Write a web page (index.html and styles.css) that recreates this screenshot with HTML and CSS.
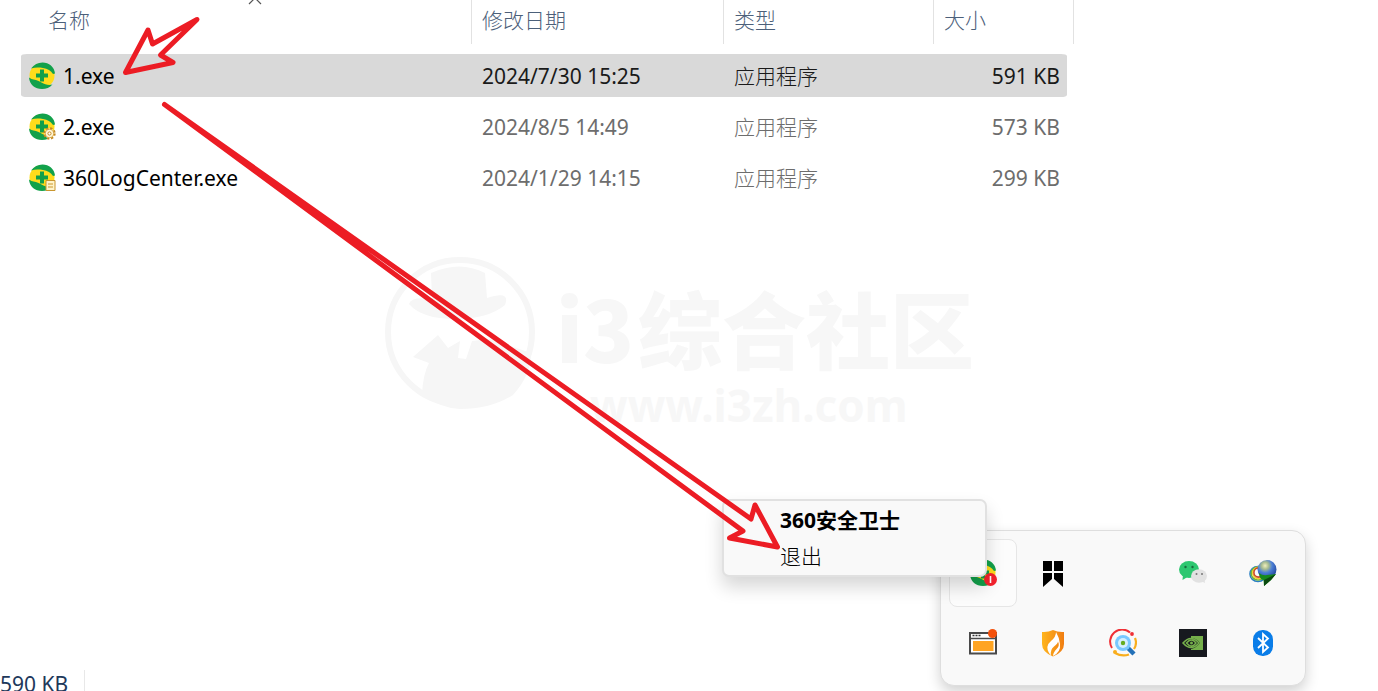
FILE: index.html
```html
<!DOCTYPE html>
<html lang="zh-CN">
<head>
<meta charset="utf-8">
<title>360</title>
<link rel="stylesheet" href="styles.css">
</head>
<body>
<svg class="defs" width="0" height="0" aria-hidden="true">
  <defs>
    <symbol id="shield" viewBox="0 0 28 28">
      <circle cx="14" cy="13.500" r="12.500" fill="#ffdc1c"/>
      <path d="M3 6.500C6 2.500 10 .5 14.500 .5 21 .5 26.500 5 27 11.500l-2 .5C23 8.500 19.500 6.500 15 6 10.500 5.300 7 5.300 3 6.500z" fill="#12a14b"/>
      <path d="M1 15.500C1.500 22.500 7 27 14 27c4 0 8-1.500 10.500-4.500-4 1-7.500 0-11-2C9.500 18 6 17.500 3.500 17z" fill="#12a14b"/>
      <path d="M12 7.500h4v4h4v4h-4v4h-4v-4H8v-4h4z" fill="#129f4a"/>
    </symbol>
  </defs>
</svg>
<main class="explorer">
  <table class="files">
    <colgroup><col class="c-name"><col class="c-date"><col class="c-type"><col class="c-size"><col class="c-end"></colgroup>
    <thead>
      <tr>
        <th scope="col"><button class="head head-name" type="button">名称</button>
          <svg class="sort" viewBox="0 0 14 6" aria-hidden="true"><path d="M1 4l6-6 6 6" fill="none" stroke="#555" stroke-width="1.200"/></svg></th>
        <th scope="col"><button class="head" type="button">修改日期</button></th>
        <th scope="col"><button class="head" type="button">类型</button></th>
        <th scope="col" colspan="2"><button class="head" type="button">大小</button></th>
      </tr>
    </thead>
    <tbody>
      <tr class="selected">
        <td><div class="file"><svg class="ico"><use href="#shield"/></svg>1.exe</div></td>
        <td>2024/7/30 15:25</td><td class="cjk">应用程序</td><td class="size">591 KB</td>
      </tr>
      <tr>
        <td><div class="file"><svg class="ico" viewBox="0 0 28 28"><use href="#shield"/><circle cx="21.500" cy="20.500" r="5" fill="#fff6d8" stroke="#c58a22" stroke-width="2.400" stroke-dasharray="2.200 1.727"/><circle cx="21.500" cy="20.500" r="4.200" fill="#fff6d8" stroke="#d9a848"/><circle cx="21.500" cy="20.500" r="1.600" fill="#fff" stroke="#c58a22"/></svg>2.exe</div></td>
        <td>2024/8/5 14:49</td><td class="cjk">应用程序</td><td class="size">573 KB</td>
      </tr>
      <tr>
        <td><div class="file"><svg class="ico" viewBox="0 0 28 28"><use href="#shield"/><path d="M18 16.500h9v10h-9z" fill="#fff3c8" stroke="#c9962f"/><path d="M20 20h5M20 23h5" stroke="#c9962f"/></svg>360LogCenter.exe</div></td>
        <td>2024/1/29 14:15</td><td class="cjk">应用程序</td><td class="size">299 KB</td>
      </tr>
    </tbody>
  </table>
  <footer class="status"><span>590 KB</span></footer>
</main>

<svg class="watermark" viewBox="0 0 600 200" role="img" aria-label="i3综合社区 www.i3zh.com">
  <circle cx="76" cy="82" r="72" fill="none" stroke="#f6f6f6" stroke-width="6"/>
  <path d="M47 23q29-13 54 0l2 25q24-8 18 7-17 14-50 14-33 0-46-15 2-8 23-5z" fill="#f6f6f6"/>
  <path d="M29 107l25-22 10 13 12-7-2 17 8 1 6-18 18-2 41 14q0 22-18 42-22 14-53 14-20-1-38-15 1-20 7-31z" fill="#f6f6f6"/>
  <text class="wm-title" x="172" y="113">i3</text>
  <text class="wm-title" x="254" y="113">综合社区</text>
  <text class="wm-url" x="206" y="172">www.i3zh.com</text>
</svg>

<section class="tray" aria-label="tray">
  <button class="cell active" type="button" aria-label="360">
    <svg viewBox="0 0 28 28"><use href="#shield"/><circle cx="21.500" cy="20.500" r="6.500" fill="#f5222d"/><path d="M21.500 17v7" stroke="#fff" stroke-width="1.600"/></svg>
  </button>
  <button class="cell" type="button" aria-label="bookmark">
    <svg viewBox="0 0 28 28"><path d="M4 2h9v10H4zM15 2h9v10h-9zM4 14h9v6l-9 8zM15 14h9v14l-9-8z" fill="#000"/></svg>
  </button>
  <span></span>
  <button class="cell" type="button" aria-label="WeChat">
    <svg viewBox="0 0 28 28"><ellipse cx="10" cy="10.500" rx="10" ry="8.500" fill="#2dc770"/><path d="M4 15l-.5 6 5-3z" fill="#2dc770"/><circle cx="6.500" cy="8" r="1.200" fill="#176b3c"/><circle cx="13.500" cy="8" r="1.200" fill="#176b3c"/><ellipse cx="20" cy="17" rx="8" ry="6.800" fill="#e2e2e2"/><path d="M22 22l4 2-.5-4z" fill="#e2e2e2"/><circle cx="17.500" cy="15" r="1" fill="#777"/><circle cx="23" cy="15" r="1" fill="#777"/></svg>
  </button>
  <button class="cell" type="button" aria-label="IDM">
    <svg viewBox="0 0 28 28">
      <defs><radialGradient id="globe" cx=".4" cy=".3" r=".75"><stop offset="0" stop-color="#f0efc0"/><stop offset=".25" stop-color="#a9bd90"/><stop offset=".5" stop-color="#4c7fd6"/><stop offset="1" stop-color="#1b3c92"/></radialGradient></defs>
      <g fill="none">
        <ellipse cx="9" cy="15" rx="8" ry="7.500" stroke="#2b7fc4" stroke-width="1.600"/>
        <ellipse cx="9" cy="14.500" rx="6.800" ry="6.500" stroke="#6db63a" stroke-width="1.600"/>
        <ellipse cx="9.500" cy="14" rx="5.800" ry="5.600" stroke="#f1cf32" stroke-width="1.600"/>
        <ellipse cx="9.500" cy="13.500" rx="4.600" ry="4.600" stroke="#c8482a" stroke-width="1.600"/>
      </g>
      <circle cx="18" cy="10.500" r="9.500" fill="url(#globe)"/>
      <path d="M10 14q4 3 8 2l9-1-5 6-7 6-.5-6q-4 0-4.500-7z" fill="#168a1c"/>
      <path d="M15 21l12-6-5 6-7 6z" fill="#0b4a10"/>
    </svg>
  </button>
  <button class="cell" type="button" aria-label="window">
    <svg viewBox="0 0 28 28"><path d="M1 4h26v20.500H1z" fill="#fff" stroke="#4a4a4a" stroke-width="2"/><path d="M1 9.500h26" stroke="#4a4a4a" stroke-width="1.500"/><path d="M3.500 6.500h9" stroke="#333" stroke-width="1.500" stroke-dasharray="2 1"/><path d="M4 12h20.500v10H4z" fill="#ffa422"/><circle cx="23.500" cy="4.500" r="4.500" fill="#f4510b"/></svg>
  </button>
  <button class="cell" type="button" aria-label="fire shield">
    <svg viewBox="0 0 28 28"><defs><linearGradient id="fire"><stop offset="0" stop-color="#ffb51c"/><stop offset="1" stop-color="#f07d12"/></linearGradient></defs><path d="M14 1q5 2.500 11 2V15q0 8-11 12.500Q3 23 3 15V3q6 .5 11-2z" fill="url(#fire)"/><path d="M17 3q0 5-5 9-6 5-2 12l2 2.500q-1-6 3-9 4-3 4-5 2 4-1 7-4 4-4 7.500 8-4 7-12-.5-6-4-12z" fill="#fff"/></svg>
  </button>
  <button class="cell" type="button" aria-label="search">
    <svg viewBox="0 0 28 28" fill="none"><path d="M3 19A12 12 0 0 1 21 3.500" stroke="#f02f35" stroke-width="2"/><circle cx="23" cy="5" r="1.900" fill="#f02f35"/><path d="M26 9a12 12 0 0 1-1 11M20 25.500q-7 2.500-14-1.500" stroke="#f9ae1d" stroke-width="2.200"/><circle cx="6" cy="23" r="2" fill="#f9ae1d"/><path d="M19 19l6 6" stroke="#2471b8" stroke-width="4.500"/><circle cx="14" cy="14" r="8" fill="#79c8ff"/><circle cx="14" cy="14" r="5" fill="#d5efff"/><circle cx="14" cy="14" r="2.200" fill="#65ac21"/></svg>
  </button>
  <button class="cell" type="button" aria-label="NVIDIA">
    <svg viewBox="0 0 28 28"><path d="M0 0h28v28H0z" fill="#17191f"/><path d="M12 7h12v14H12z" fill="#76b04b"/><path d="M12 9q5 0 9 5-4 5-9 6z" fill="#17191f"/><path d="M4 14q8-9 16 0-8 9-16 0zM7.500 14q5-6 9.500 0-4.500 6-9.500 0z" fill="none" stroke="#76b04b" stroke-width="1.500"/><circle cx="12.500" cy="14" r="1.500" fill="#76b04b"/></svg>
  </button>
  <button class="cell" type="button" aria-label="Bluetooth">
    <svg viewBox="0 0 28 28"><rect x="4" y="1" width="20" height="26" rx="9.500" fill="#0a7de8"/><path d="M9 9l10 9.500-5 4.500V5l5 4.500L9 19" fill="none" stroke="#fff" stroke-width="1.800"/></svg>
  </button>
</section>

<menu class="context">
  <li><button class="item strong" type="button">360安全卫士</button></li>
  <li><button class="item" type="button">退出</button></li>
</menu>

<svg class="arrows" viewBox="0 0 800 560" aria-hidden="true">
  <path d="M125.500 72.500L148 30l4.500 14L197 19.500 160.500 55l12.500 7.500z"/>
  <path d="M164.500 104.500L751 519l4-14 22.500 42-48-9 13.500-7z"/>
</svg>
</body>
</html>
```
FILE: styles.css
```css
* { box-sizing: border-box; }
body {
  margin: 0;
  height: 100vh;
  position: relative;
  overflow: hidden;
  background: #fff;
  color: #000;
  font: 21px/28px "Noto Sans", "Noto Sans CJK SC", sans-serif;
}
button {
  margin: 0;
  padding: 0;
  border: 0;
  background: none;
  color: inherit;
  font: inherit;
  text-align: left;
}
.defs { position: absolute; }
.explorer {
  height: 100%;
  display: flex;
  flex-direction: column;
}
.files {
  width: 1053px;
  margin-left: 21px;
  table-layout: fixed;
  border-collapse: separate;
  border-spacing: 0;
}
.c-name { width: 451px; }
.c-date { width: 252px; }
.c-type { width: 210px; }
.c-size { width: 133px; }
.c-end { width: 7px; }
th {
  position: relative;
  height: 50px;
  padding: 0;
  vertical-align: top;
  font-weight: 300;
}
.head {
  display: block;
  width: 100%;
  height: 44px;
  padding: 0 10px 6px;
  border-right: 1px solid #e2e2e2;
  color: #4c607a;
  font-family: "Noto Sans CJK SC", sans-serif;
}
.head-name { padding-left: 27px; }
.sort {
  position: absolute;
  top: 0;
  left: 227px;
  width: 14px;
  height: 6px;
}
td {
  height: 51px;
  padding: 0 10px;
  border: solid transparent;
  border-width: 4px 0;
  background-clip: padding-box;
  color: #6d6d6d;
}
td:first-child { padding-left: 7px; color: #000; }
.size { padding-right: 7px; text-align: right; }
.selected td { background-color: #d9d9d9; color: #1a1a1a; }
.selected td:first-child { border-radius: 6px 0 0 6px; color: #000; }
.selected .size { border-radius: 0 6px 6px 0; }
.cjk {
  padding-bottom: 2px;
  font-family: "Noto Sans CJK SC", sans-serif;
  font-weight: 300;
}
.file { display: flex; align-items: center; gap: 7px; }
.ico { width: 28px; height: 28px; }
.status {
  height: 21px;
  margin-top: auto;
  color: #1e395b;
}
.status span {
  display: inline-block;
  width: 85px;
  border-right: 1px solid #e8e8e8;
}
.watermark {
  position: absolute;
  left: 384px;
  top: 250px;
  width: 600px;
  height: 200px;
}
.watermark text { fill: #f7f7f7; }
.wm-title { font: 900 84px "Noto Sans CJK SC", sans-serif; }
.wm-url { font: 700 44px "Noto Sans", sans-serif; }
.tray {
  position: absolute;
  left: 940px;
  top: 530px;
  display: grid;
  grid-template-columns: repeat(5, 70px);
  grid-auto-rows: 70px;
  padding: 7px;
  border: 1px solid #dedede;
  border-radius: 14px;
  background: #f9f9f9;
  box-shadow: 0 6px 14px rgba(0, 0, 0, .18);
}
.cell {
  display: grid;
  place-items: center;
  margin: 1px;
  border: 1px solid transparent;
  border-radius: 8px;
}
.cell svg { width: 28px; height: 28px; }
.cell.active { border-color: #e6e6e6; background: #fcfcfc; }
.context {
  position: absolute;
  left: 722px;
  top: 499px;
  width: 265px;
  margin: 0;
  padding: 1px 0 3px;
  border: 2px solid #e1e1e1;
  border-radius: 7px;
  background: #f9f9f9;
  box-shadow: 0 10px 18px rgba(0, 0, 0, .16);
  list-style: none;
}
.item {
  display: block;
  width: 100%;
  height: 35px;
  padding-left: 56px;
  font-family: "Noto Sans CJK SC", sans-serif;
  font-weight: 300;
}
.strong { font-family: "Noto Sans", "Noto Sans CJK SC", sans-serif; font-weight: 700; }
.arrows {
  position: absolute;
  left: 0;
  top: 0;
  width: 800px;
  height: 560px;
  fill: none;
  stroke: #ec1c24;
  stroke-width: 5;
  stroke-linejoin: round;
  pointer-events: none;
}
```
